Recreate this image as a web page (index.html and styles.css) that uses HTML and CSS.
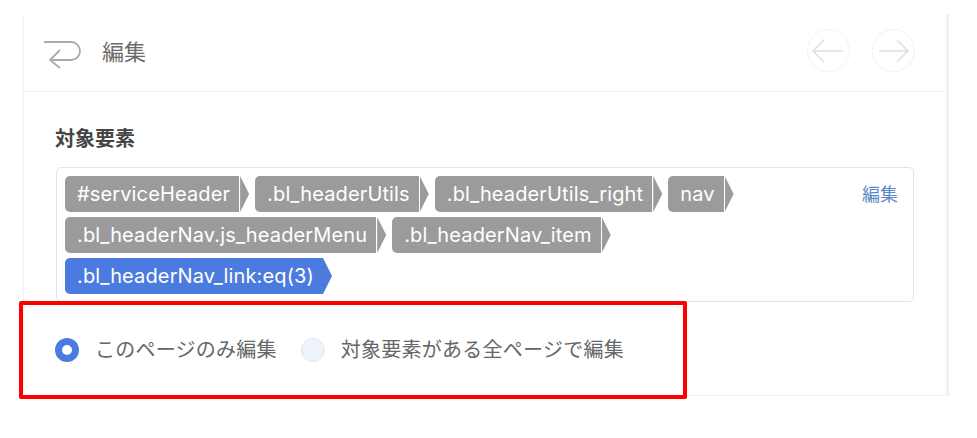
FILE: index.html
```html
<!DOCTYPE html>
<html lang="ja">
<head>
<meta charset="utf-8">
<title>編集</title>
<link rel="stylesheet" href="styles.css">
</head>
<body>
<main class="panel">
  <header class="head">
    <svg class="back" width="38" height="32" viewBox="0 0 38 32" fill="none" stroke="#aaa" stroke-width="1.8"><path d="M0 3H27C32 3 36 7 36 12C36 17 32 21 27 21H7"/><path d="M16 11L6 21L16 29"/></svg>
    <h1 class="title">編集</h1>
    <div class="navs">
      <span class="circle"><svg width="34" height="24" viewBox="0 0 34 24" fill="none" stroke="#e2e2e2" stroke-width="1.7"><path d="M31 12H1"/><path d="M12 1L1 12L12 23"/></svg></span>
      <span class="circle"><svg width="30" height="24" viewBox="0 0 30 24" fill="none" stroke="#e2e2e2" stroke-width="1.7"><path d="M0 12H29"/><path d="M18 1L29 12L18 23"/></svg></span>
    </div>
  </header>
  <section class="body">
    <h2 class="label">対象要素</h2>
    <div class="box">
      <div class="tags">
        <span class="tag">#serviceHeader</span>
        <span class="tag">.bl_headerUtils</span>
        <span class="tag">.bl_headerUtils_right</span>
        <span class="tag">nav</span>
        <span class="tag">.bl_headerNav.js_headerMenu</span>
        <span class="tag">.bl_headerNav_item</span>
        <span class="tag active">.bl_headerNav_link:eq(3)</span>
      </div>
      <a class="edit">編集</a>
    </div>
    <div class="radios">
      <label class="radio"><span class="dot on"></span>このページのみ編集</label>
      <label class="radio"><span class="dot"></span>対象要素がある全ページで編集</label>
    </div>
  </section>
</main>
<div class="highlight"></div>
</body>
</html>
```
FILE: styles.css
```css
* { box-sizing: border-box; }
body {
  margin: 0;
  background: #fff;
  font-family: Inter, "Noto Sans CJK JP", sans-serif;
}
.panel {
  margin: 14px 0 0 23px;
  width: 926px;
  height: 382px;
  border-left: 1px solid #f1f3f6;
  border-right: 3px solid #eef2f9;
  border-bottom: 1px solid #f1f3f6;
}
.head {
  display: flex;
  align-items: center;
  height: 78px;
  padding: 0 31px 0 20px;
  border-bottom: 1px solid #f1f3f6;
}
.back { margin-top: 5px; }
.title {
  margin: 0 0 2px 20px;
  font-size: 22px;
  font-weight: 400;
  color: #6b6b6b;
  line-height: 1;
  flex: 1;
}
.navs { display: flex; gap: 22px; margin-bottom: 4px; }
.circle {
  display: flex;
  align-items: center;
  justify-content: center;
  width: 43px;
  height: 43px;
  border: 1px solid #f2f2f2;
  border-radius: 50%;
}
.body { padding: 36px 32px 0; }
.label {
  margin: 0 0 17px -1px;
  font-size: 20px;
  line-height: 22px;
  font-weight: 700;
  color: #444;
}
.box {
  display: flex;
  justify-content: space-between;
  height: 135px;
  padding: 8px 15px 0 8px;
  border: 1px solid #d8e6f5;
  border-radius: 5px;
}
.tags {
  display: flex;
  flex-wrap: wrap;
  align-content: flex-start;
  gap: 5px 16px;
  width: 700px;
}
.tag {
  position: relative;
  height: 36px;
  padding: 0 9px 0 12px;
  background: #9b9b9b;
  border-radius: 5px 0 0 5px;
  color: #fff;
  font-size: 20px;
  letter-spacing: 0.13px;
  line-height: 36px;
  white-space: nowrap;
}
.tag::after {
  content: "";
  position: absolute;
  top: 0;
  right: -10px;
  bottom: 0;
  width: 9px;
  background: #9b9b9b;
  clip-path: polygon(0 0, 100% 50%, 0 100%);
}
.tag.active {
  background: #4c7be0;
}
.tag.active::after {
  right: -9px;
  background: #4c7be0;
}
.edit {
  margin-top: 8px;
  font-size: 18px;
  line-height: 22px;
  color: #5a8ac6;
}
.radios {
  display: flex;
  gap: 24px;
  margin: 34px 0 0 -1px;
  font-size: 20px;
  letter-spacing: 0.25px;
  color: #666;
}
.radio {
  display: flex;
  align-items: center;
  gap: 16px;
  line-height: 28px;
}
.dot {
  width: 24px;
  height: 24px;
  border: 1px solid #dfe7f5;
  border-radius: 50%;
  background: #eef2fa;
}
.dot.on {
  border: 7px solid #4c7be0;
  background: #fff;
}
.highlight {
  position: absolute;
  left: 19px;
  top: 301px;
  width: 668px;
  height: 98px;
  border: 4px solid #f00;
  border-radius: 2px;
}
```
